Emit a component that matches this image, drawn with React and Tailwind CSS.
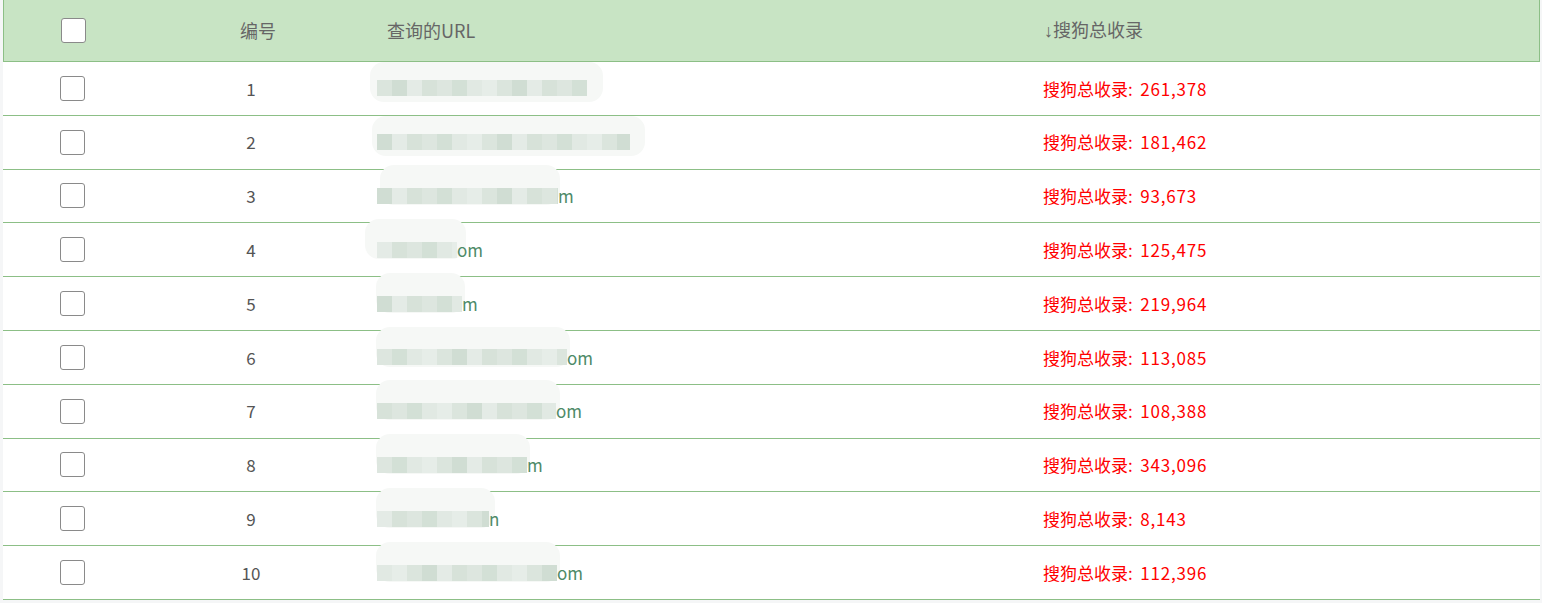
import React from "react";

const rows = [
  { id: 1, total: "261,378", strip: 210, haze: [370, 603], suffix: "" },
  { id: 2, total: "181,462", strip: 253, haze: [372, 645], suffix: "" },
  { id: 3, total: "93,673", strip: 181, haze: [380, 560], suffix: "m" },
  { id: 4, total: "125,475", strip: 80, haze: [365, 466], suffix: "om" },
  { id: 5, total: "219,964", strip: 85, haze: [376, 465], suffix: "m" },
  { id: 6, total: "113,085", strip: 190, haze: [376, 570], suffix: "om" },
  { id: 7, total: "108,388", strip: 179, haze: [376, 560], suffix: "om" },
  { id: 8, total: "343,096", strip: 150, haze: [376, 530], suffix: "m" },
  { id: 9, total: "8,143", strip: 112, haze: [376, 495], suffix: "n" },
  { id: 10, total: "112,396", strip: 180, haze: [376, 560], suffix: "om" },
];

const tones = ["#e4ebe6", "#d3e0d6", "#dbe5dd", "#d7e2d9", "#e1e9e3", "#d0ddd3", "#dde6df", "#e6ede8"];

const Check = () => (
  <span className="block h-[25px] w-[25px] rounded-[3px] border-[1.5px] border-[#8a8a8a] bg-white" />
);

// pixelated blur where the url used to be
const Blurred = ({ strip, haze, suffix }) => {
  const n = Math.ceil(strip / 15);
  return (
    <div className="relative flex items-center">
      <div
        className="absolute top-[-18px] h-[40px] rounded-[14px] bg-[#f6f8f6]"
        style={{ left: haze[0] - 377, width: haze[1] - haze[0] }}
      />
      <div className="relative flex h-[16px] overflow-hidden" style={{ width: strip }}>
        {Array.from({ length: n }).map((_, i) => (
          <span
            key={i}
            className="h-full w-[15px] shrink-0"
            style={{ background: tones[(i * 3 + strip) % tones.length] }}
          />
        ))}
      </div>
      {suffix && <span className="relative text-[#4e8a68]">{suffix}</span>}
    </div>
  );
};

export default function App() {
  return (
    <div
      className="min-h-[603px] bg-[#f5f6f7] px-[3px] pr-[2px]"
      style={{ fontFamily: '"Noto Sans CJK SC", "Noto Sans", sans-serif' }}
    >
      <div className="grid h-[62px] grid-cols-[139px_218px_683px_1fr] items-center border-b border-l border-r border-[#8cbf86] bg-[#c8e4c4] text-[18px] text-[#666]">
        <div className="flex justify-center">
          <Check />
        </div>
        <div className="pl-[12px] text-center">编号</div>
        <div className="pl-[26px]">查询的URL</div>
        <div>
          <span className="font-['Liberation_Sans',sans-serif]">↓</span>搜狗总收录
        </div>
      </div>
      {rows.map((r) => (
        <div
          key={r.id}
          className="grid h-[53.8px] grid-cols-[139px_218px_683px_1fr] items-center border-b border-[#8cbf86] bg-white text-[17px]"
        >
          <div className="flex justify-center">
            <Check />
          </div>
          <div className="text-center text-[#555]">{r.id}</div>
          <div className="pl-[17px]">
            <Blurred strip={r.strip} haze={r.haze} suffix={r.suffix} />
          </div>
          <div className="text-[#ff0000]">
            搜狗总收录:<span className="ml-[3px] tracking-[0.8px]"> {r.total}</span>
          </div>
        </div>
      ))}
    </div>
  );
}
